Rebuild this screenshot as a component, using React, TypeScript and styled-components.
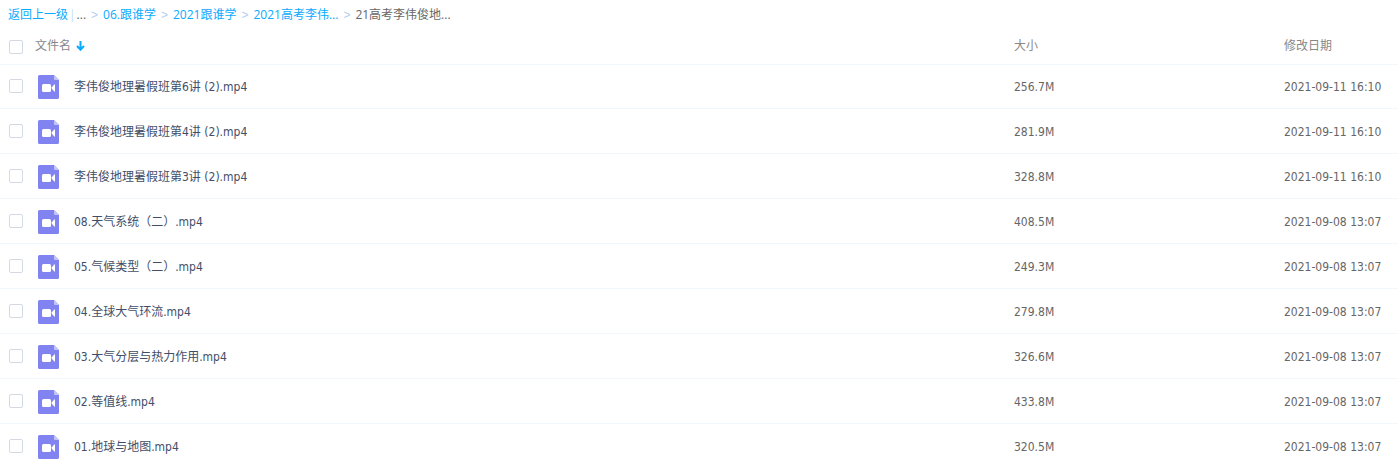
import React from 'react';
import styled, { createGlobalStyle } from 'styled-components';

const GlobalStyle = createGlobalStyle`
  body {
    margin: 0;
    background: #fff;
    overflow: hidden;
    font-family: 'DejaVu Sans Condensed', 'Noto Sans CJK SC', sans-serif;
    font-size: 12px;
    line-height: 18px;
  }
`;

const Breadcrumb = styled.nav`
  display: flex;
  align-items: center;
  box-sizing: border-box;
  height: 28px;
  padding: 2px 0 0 8px;
  font-family: 'Open Sans', 'Noto Sans CJK SC', sans-serif;
  color: #666;
  white-space: nowrap;
`;

const Crumb = styled.a`
  color: #09aaff;
  text-decoration: none;
`;

const Divider = styled.span`
  margin: 0 1px;
  color: #c4dbfe;
`;

const Separator = styled.span`
  margin: 0 5px;
  font-family: 'Liberation Sans', sans-serif;
  color: #b4cdf2;
`;

const FileTable = styled.table`
  width: 100%;
  table-layout: fixed;
  border-collapse: separate;
  border-spacing: 0;
`;

const CheckCol = styled.col`
  width: 35px;
`;
const SizeCol = styled.col`
  width: 270px;
`;
const DateCol = styled.col`
  width: 114px;
`;

const HeadCell = styled.th<{ $check?: boolean }>`
  box-sizing: border-box;
  height: 36px;
  padding: ${(p) => (p.$check ? '2px 0 0' : '0')};
  font-weight: 400;
  text-align: left;
  vertical-align: middle;
  color: #888;
`;

const SortLabel = styled.span`
  display: flex;
  align-items: center;
  gap: 5px;
`;

const Row = styled.tr`
  &:first-child > td {
    box-shadow: inset 0 1px #f2f6fd;
  }
`;

const Cell = styled.td<{ $check?: boolean }>`
  box-sizing: border-box;
  height: 45px;
  padding: ${(p) => (p.$check ? '0' : '2px 0 0')};
  border-bottom: 1px solid #f2f6fd;
  vertical-align: middle;
  color: #666;
  white-space: nowrap;
`;

const FileLabel = styled.label`
  display: flex;
  align-items: center;
  gap: 15px;
  padding-left: 3px;
  color: #424e67;
`;

const Checkbox = styled.input`
  appearance: none;
  display: block;
  box-sizing: border-box;
  width: 14px;
  height: 14px;
  margin: 0 0 0 9px;
  border: 1px solid #d3dae3;
  border-radius: 2px;
  background: #fff;

  &:checked {
    border-color: #09aaff;
    background: #09aaff;
  }
`;

const VideoIcon = () => (
  <svg width="21" height="24" viewBox="0 0 21 24" aria-hidden="true">
    <path d="M1.5 0H16l5 5v17.5a1.5 1.5 0 0 1-1.5 1.5h-18A1.5 1.5 0 0 1 0 22.500v-21A1.500 1.500 0 0 1 1.500 0z" fill="#8183f1" />
    <path d="M16 0l5 5h-4a1 1 0 0 1-1-1z" fill="#c3c4fa" />
    <rect x="4" y="9" width="9" height="8" rx="1.500" fill="#fff" />
    <path d="M13.800 12.200L16.300 9.500q.7-.5.7.2v6.600q0 .7-.7.2L13.800 13.800z" fill="#fff" />
  </svg>
);

const SortArrow = () => (
  <svg width="9" height="10" viewBox="0 0 9 10" aria-hidden="true">
    <path d="M4.500 0v8.500M1 5l3.500 3.700L8 5" fill="none" stroke="#09aaff" strokeWidth="2" />
  </svg>
);

const parents = ['06.跟谁学', '2021跟谁学', '2021高考李伟...'];

const files = [
  { name: '李伟俊地理暑假班第6讲 (2).mp4', size: '256.7M', date: '2021-09-11 16:10' },
  { name: '李伟俊地理暑假班第4讲 (2).mp4', size: '281.9M', date: '2021-09-11 16:10' },
  { name: '李伟俊地理暑假班第3讲 (2).mp4', size: '328.8M', date: '2021-09-11 16:10' },
  { name: '08.天气系统（二）.mp4', size: '408.5M', date: '2021-09-08 13:07' },
  { name: '05.气候类型（二）.mp4', size: '249.3M', date: '2021-09-08 13:07' },
  { name: '04.全球大气环流.mp4', size: '279.8M', date: '2021-09-08 13:07' },
  { name: '03.大气分层与热力作用.mp4', size: '326.6M', date: '2021-09-08 13:07' },
  { name: '02.等值线.mp4', size: '433.8M', date: '2021-09-08 13:07' },
  { name: '01.地球与地图.mp4', size: '320.5M', date: '2021-09-08 13:07' },
];

export default function App() {
  return (
    <main lang="zh-CN">
      <GlobalStyle />
      <Breadcrumb>
        <Crumb href="#up">返回上一级</Crumb>
        <Divider>|</Divider>
        <span>...</span>
        <Separator>&gt;</Separator>
        {parents.map((name) => (
          <React.Fragment key={name}>
            <Crumb href={`#${name}`}>{name}</Crumb>
            <Separator>&gt;</Separator>
          </React.Fragment>
        ))}
        <span>21高考李伟俊地...</span>
      </Breadcrumb>
      <FileTable>
        <colgroup>
          <CheckCol />
          <col />
          <SizeCol />
          <DateCol />
        </colgroup>
        <thead>
          <tr>
            <HeadCell $check>
              <Checkbox type="checkbox" aria-label="全选" />
            </HeadCell>
            <HeadCell>
              <SortLabel>
                文件名
                <SortArrow />
              </SortLabel>
            </HeadCell>
            <HeadCell>大小</HeadCell>
            <HeadCell>修改日期</HeadCell>
          </tr>
        </thead>
        <tbody>
          {files.map((file, i) => (
            <Row key={file.name}>
              <Cell $check>
                <Checkbox type="checkbox" id={`file-${i}`} />
              </Cell>
              <Cell>
                <FileLabel htmlFor={`file-${i}`}>
                  <VideoIcon />
                  {file.name}
                </FileLabel>
              </Cell>
              <Cell>{file.size}</Cell>
              <Cell>{file.date}</Cell>
            </Row>
          ))}
        </tbody>
      </FileTable>
    </main>
  );
}
